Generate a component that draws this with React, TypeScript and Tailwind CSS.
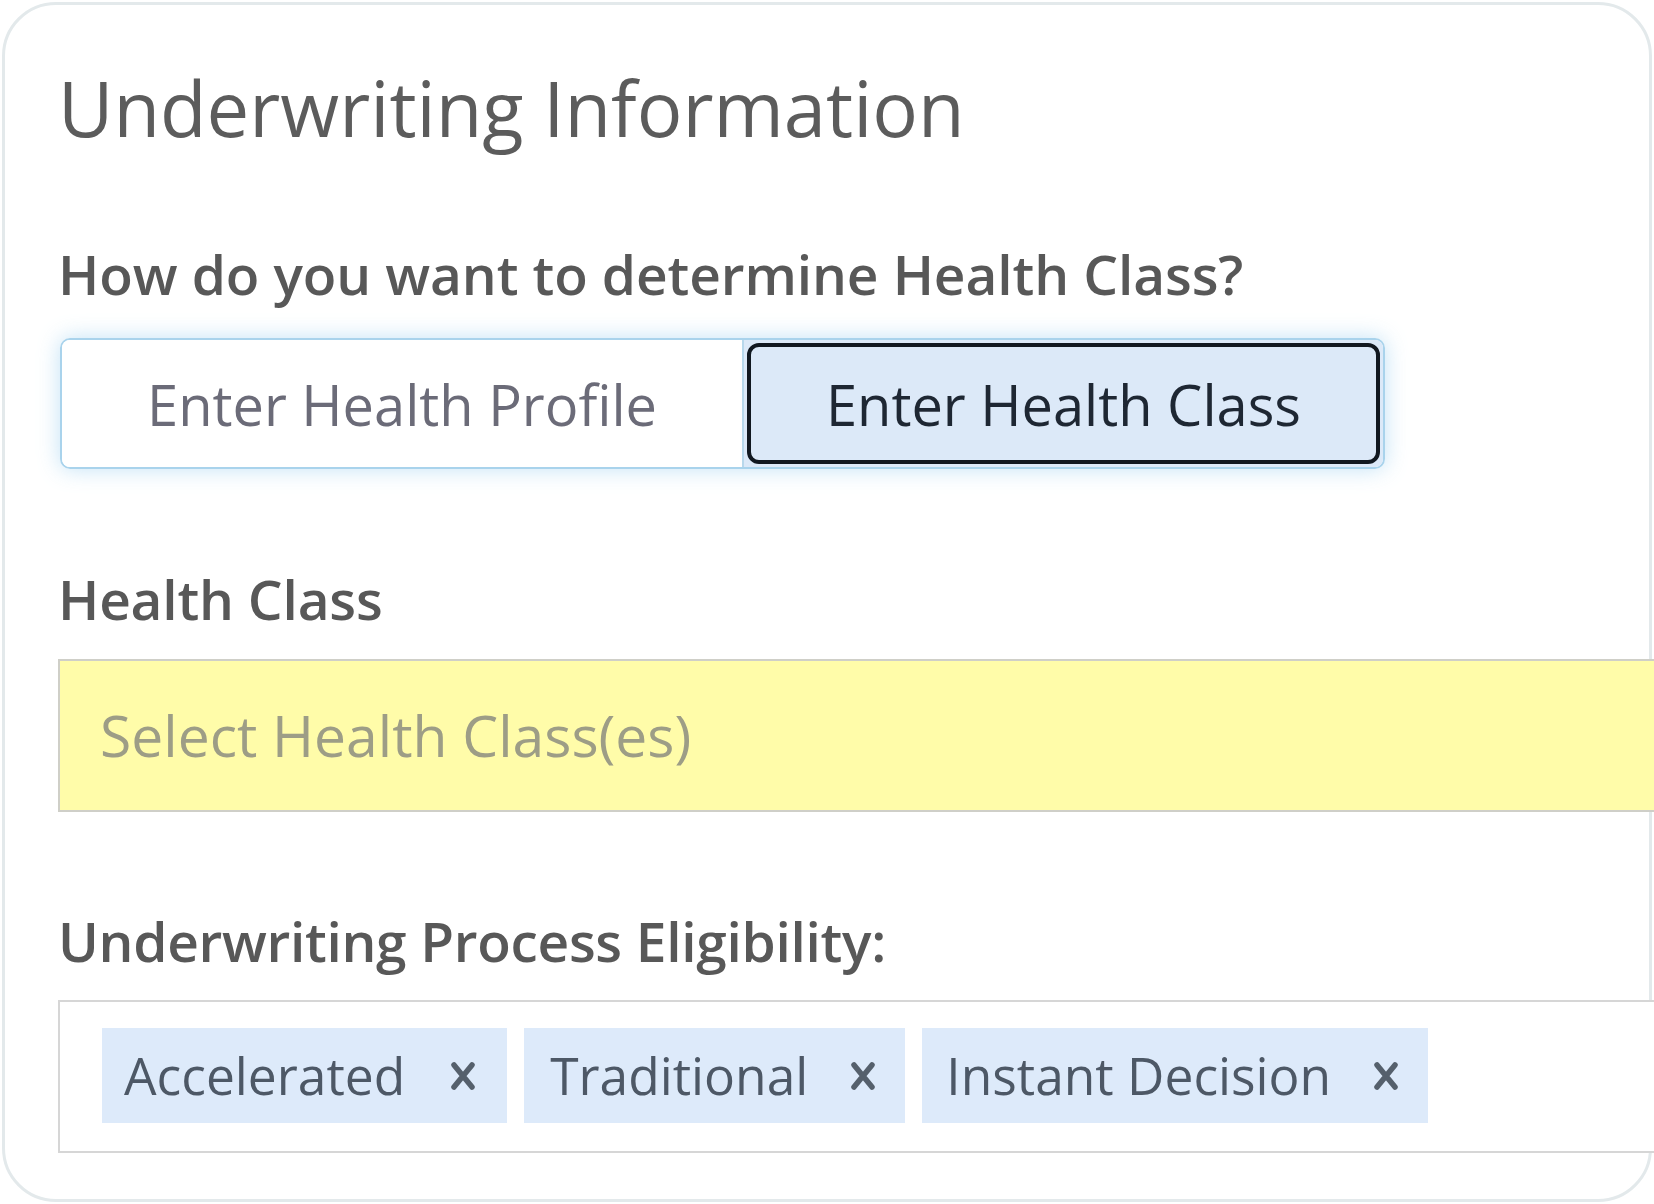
const chips = [
  { label: "Accelerated", pl: "pl-[22px]", gap: "gap-[45px]", pr: "pr-[31px]" },
  { label: "Traditional", pl: "pl-[26px]", gap: "gap-[42px]", pr: "pr-[29px]" },
  { label: "Instant Decision", pl: "pl-[24px]", gap: "gap-[42px]", pr: "pr-[29px]" },
];

const RemoveIcon = () => (
  <svg width="26" height="30" viewBox="0 0 26 30" className="shrink-0">
    <path
      d="M4 4 L22 26 M22 4 L4 26"
      stroke="#55606c"
      strokeWidth="5.5"
      strokeLinecap="round"
    />
  </svg>
);

const App = () => {
  return (
    <div className="h-screen w-screen overflow-hidden bg-white p-[2px] font-['Open_Sans',sans-serif]">
      <section className="h-full rounded-[54px] border-[3px] border-[#e3e9eb] bg-white pl-[53px] pt-[65px]">
        <h1 className="text-[76px] leading-none text-[#5c5c5c]">
          Underwriting Information
        </h1>

        <p className="mt-[100px] text-[55px] font-semibold leading-none tracking-[-0.1px] text-[#585858]">
          How do you want to determine Health Class?
        </p>

        <div className="ml-[2px] mt-[37px] flex h-[131px] w-[1325px] overflow-hidden rounded-[10px] border-2 border-[#a9d3ec] shadow-[0_0_22px_rgba(120,190,235,0.45)]">
          <button className="flex w-[682px] items-center justify-center border-r-2 border-[#b8d8ec] bg-white text-[56px] leading-none text-[#6b6b78]">
            Enter Health Profile
          </button>
          <div className="flex flex-1 bg-[#dce9f8] p-[3px]">
            <button className="flex flex-1 items-center justify-center rounded-[12px] border-[4px] border-[#111820] text-[56px] leading-none text-[#1e2733]">
              Enter Health Class
            </button>
          </div>
        </div>

        <p className="mt-[102px] text-[55px] font-semibold leading-none tracking-[-0.2px] text-[#585858]">
          Health Class
        </p>

        <div className="mt-[33px] flex h-[153px] w-[1640px] items-center border-2 border-[#cfcfc8] bg-[#fffca9] pl-[40px]">
          <span className="text-[57px] leading-none text-[#9d9d86]">
            Select Health Class(es)
          </span>
        </div>

        <p className="mt-[101px] text-[55px] font-semibold leading-none tracking-[-0.3px] text-[#585858]">
          Underwriting Process Eligibility:
        </p>

        <div className="mt-[32px] flex h-[153px] w-[1640px] items-start gap-[17px] border-2 border-[#d6d6d6] bg-white pl-[42px] pt-[26px]">
          {chips.map((chip) => (
            <div
              key={chip.label}
              className={`flex h-[95px] items-center bg-[#ddeafa] ${chip.pl} ${chip.gap} ${chip.pr}`}
            >
              <span className="text-[51.5px] leading-none text-[#4d5866]">
                {chip.label}
              </span>
              <RemoveIcon />
            </div>
          ))}
        </div>
      </section>
    </div>
  );
};

export default App;
